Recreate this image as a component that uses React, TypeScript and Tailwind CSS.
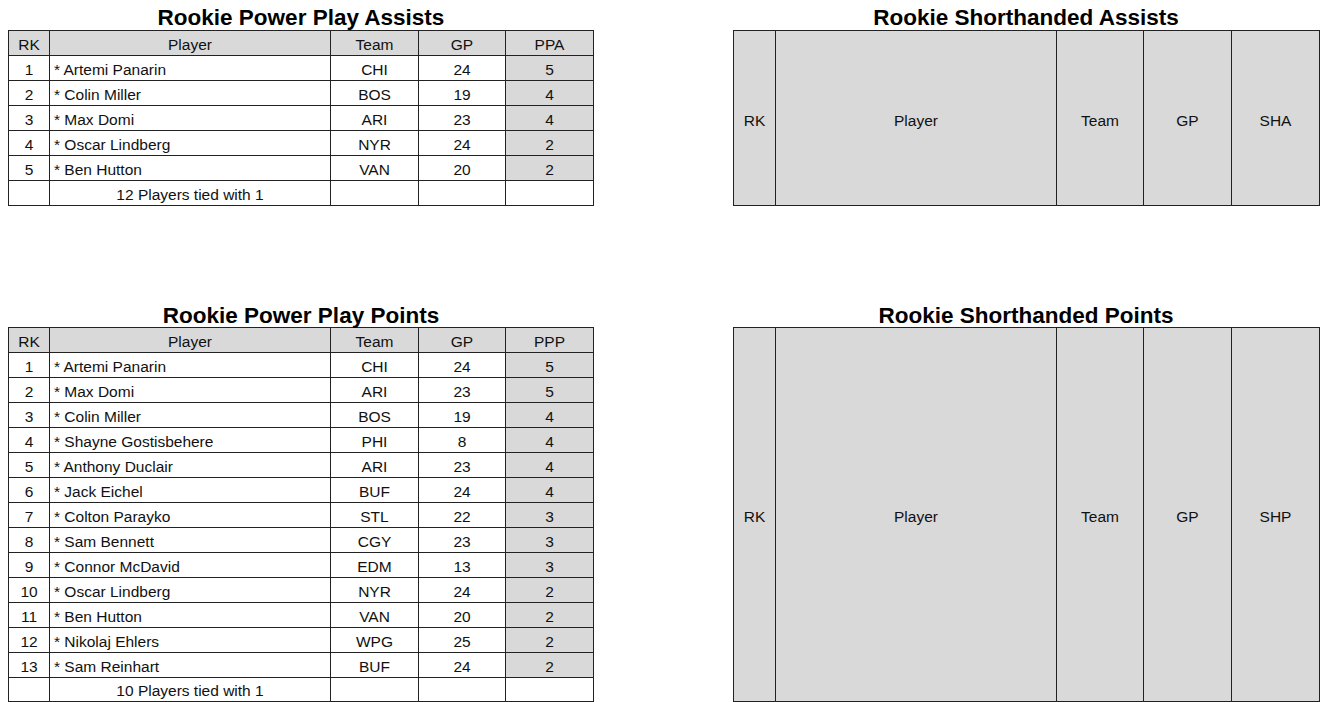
const font = "font-['Liberation_Sans',Arial,sans-serif]";

type Row = { rk: string; player: string; team: string; gp: string; val: string };

const ppa: Row[] = [
  { rk: "1", player: "* Artemi Panarin", team: "CHI", gp: "24", val: "5" },
  { rk: "2", player: "* Colin Miller", team: "BOS", gp: "19", val: "4" },
  { rk: "3", player: "* Max Domi", team: "ARI", gp: "23", val: "4" },
  { rk: "4", player: "* Oscar Lindberg", team: "NYR", gp: "24", val: "2" },
  { rk: "5", player: "* Ben Hutton", team: "VAN", gp: "20", val: "2" },
];

const ppp: Row[] = [
  { rk: "1", player: "* Artemi Panarin", team: "CHI", gp: "24", val: "5" },
  { rk: "2", player: "* Max Domi", team: "ARI", gp: "23", val: "5" },
  { rk: "3", player: "* Colin Miller", team: "BOS", gp: "19", val: "4" },
  { rk: "4", player: "* Shayne Gostisbehere", team: "PHI", gp: "8", val: "4" },
  { rk: "5", player: "* Anthony Duclair", team: "ARI", gp: "23", val: "4" },
  { rk: "6", player: "* Jack Eichel", team: "BUF", gp: "24", val: "4" },
  { rk: "7", player: "* Colton Parayko", team: "STL", gp: "22", val: "3" },
  { rk: "8", player: "* Sam Bennett", team: "CGY", gp: "23", val: "3" },
  { rk: "9", player: "* Connor McDavid", team: "EDM", gp: "13", val: "3" },
  { rk: "10", player: "* Oscar Lindberg", team: "NYR", gp: "24", val: "2" },
  { rk: "11", player: "* Ben Hutton", team: "VAN", gp: "20", val: "2" },
  { rk: "12", player: "* Nikolaj Ehlers", team: "WPG", gp: "25", val: "2" },
  { rk: "13", player: "* Sam Reinhart", team: "BUF", gp: "24", val: "2" },
];

const cell = "border border-[#222] align-bottom pb-[2px] leading-[17px] text-center";

const Cols = () => (
  <colgroup>
    <col className="w-[41px]" />
    <col className="w-[281px]" />
    <col className="w-[88px]" />
    <col className="w-[87px]" />
    <col className="w-[88px]" />
  </colgroup>
);

const StatTable = ({ stat, rows, footer, footH }: { stat: string; rows: Row[]; footer: string; footH: string }) => (
  <table className="w-[586px] table-fixed border-collapse text-[15.5px] text-[#111]">
    <Cols />
    <thead>
      <tr className="h-[25px] bg-[#d9d9d9]">
        <th className={`${cell} font-normal`}>RK</th>
        <th className={`${cell} font-normal`}>Player</th>
        <th className={`${cell} font-normal`}>Team</th>
        <th className={`${cell} font-normal`}>GP</th>
        <th className={`${cell} font-normal`}>{stat}</th>
      </tr>
    </thead>
    <tbody>
      {rows.map((r) => (
        <tr key={r.rk} className="h-[25px]">
          <td className={cell}>{r.rk}</td>
          <td className={`${cell} text-left pl-[4px]`}>{r.player}</td>
          <td className={cell}>{r.team}</td>
          <td className={cell}>{r.gp}</td>
          <td className={`${cell} bg-[#d9d9d9]`}>{r.val}</td>
        </tr>
      ))}
      <tr className={footH}>
        <td className={cell}></td>
        <td className={cell}>{footer}</td>
        <td className={cell}></td>
        <td className={cell}></td>
        <td className={cell}></td>
      </tr>
    </tbody>
  </table>
);

const EmptyTable = ({ stat, height }: { stat: string; height: string }) => (
  <table className="w-[586px] table-fixed border-collapse text-[15.5px] text-[#111]">
    <colgroup>
      <col className="w-[42px]" />
      <col className="w-[281px]" />
      <col className="w-[87px]" />
      <col className="w-[88px]" />
      <col className="w-[88px]" />
    </colgroup>
    <tbody>
      <tr className={`${height} bg-[#d9d9d9]`}>
        {["RK", "Player", "Team", "GP", stat].map((h) => (
          <td key={h} className="border border-[#222] text-center align-middle pt-[5px]">
            {h}
          </td>
        ))}
      </tr>
    </tbody>
  </table>
);

const Title = ({ text, pad }: { text: string; pad: string }) => (
  <div className={`h-[31px] ${pad} text-center text-[22.5px] font-bold leading-[25px] text-black`}>
    {text}
  </div>
);

export default function App() {
  return (
    <div className={`${font} w-[1327px] h-[702px] overflow-hidden bg-white flex gap-[139px] pl-[8px]`}>
      <div className="w-[586px] flex flex-col">
        <Title text="Rookie Power Play Assists" pad="pt-[5px]" />
        <StatTable stat="PPA" rows={ppa} footer="12 Players tied with 1" footH="h-[25px]" />
        <div className="mt-[90px]">
          <Title text="Rookie Power Play Points" pad="pt-[7px]" />
          <StatTable stat="PPP" rows={ppp} footer="10 Players tied with 1" footH="h-[24px]" />
        </div>
      </div>
      <div className="w-[586px] flex flex-col">
        <Title text="Rookie Shorthanded Assists" pad="pt-[5px]" />
        <EmptyTable stat="SHA" height="h-[175px]" />
        <div className="mt-[90px]">
          <Title text="Rookie Shorthanded Points" pad="pt-[7px]" />
          <EmptyTable stat="SHP" height="h-[374px]" />
        </div>
      </div>
    </div>
  );
}
